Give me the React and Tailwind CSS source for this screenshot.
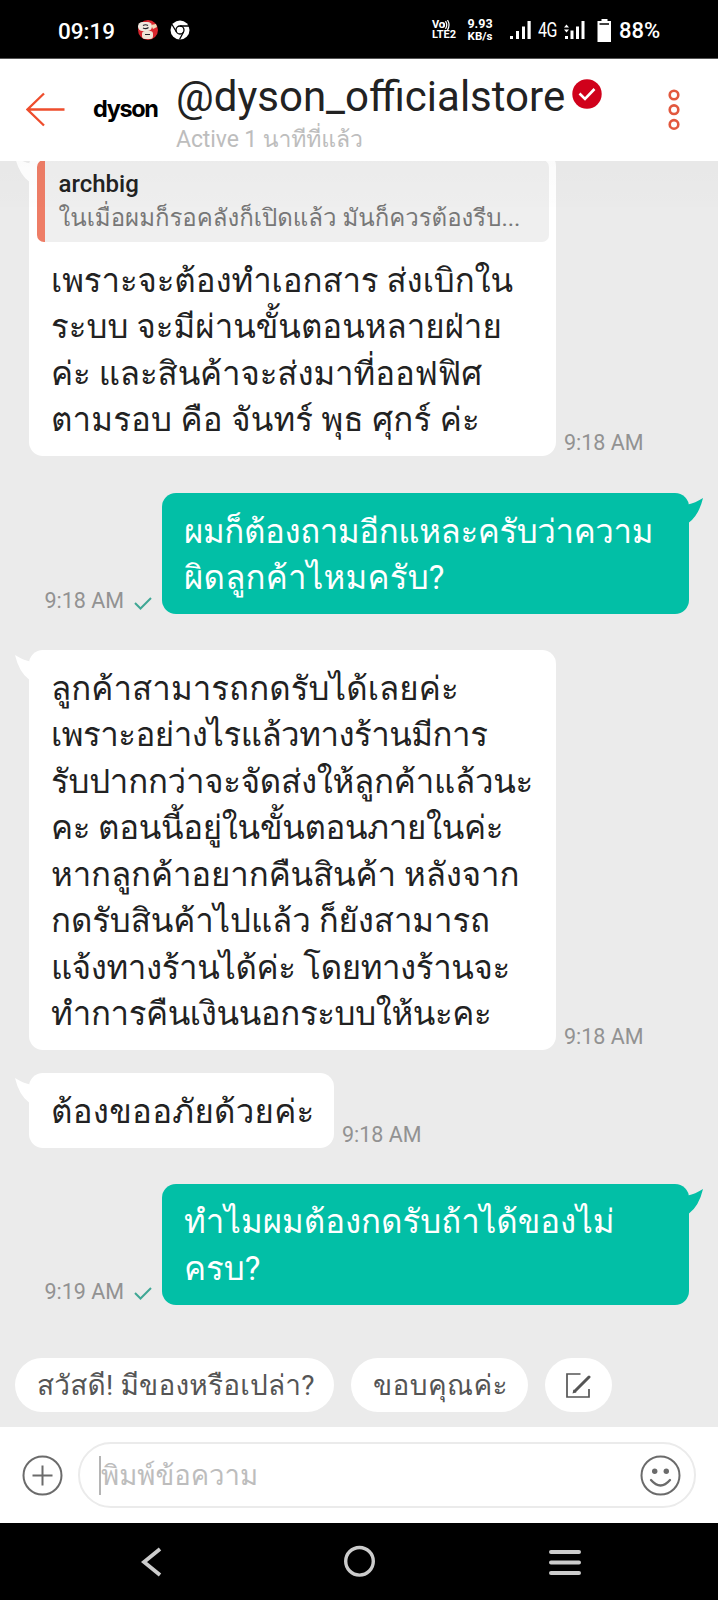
import React from 'react';

// `fit` nudges the letter spacing of a line
const messages = [
    {
        id: 1,
        side: 'left',
        time: '9:18 AM',
        box: 'w-[527px] -mt-[9px]',
        quote: {
            name: 'archbig',
            text: 'ในเมื่อผมก็รอคลังก็เปิดแล้ว มันก็ควรต้องรีบ...'
        },
        lines: [
            { text: 'เพราะจะต้องทำเอกสาร ส่งเบิกใน', fit: 'tracking-[-0.1px]' },
            { text: 'ระบบ จะมีผ่านขั้นตอนหลายฝ่าย' },
            { text: 'ค่ะ และสินค้าจะส่งมาที่ออฟฟิศ', fit: 'tracking-[-0.1px]' },
            { text: 'ตามรอบ คือ จันทร์ พุธ ศุกร์ ค่ะ', fit: 'tracking-[0.17px]' }
        ]
    },
    {
        id: 2,
        side: 'right',
        time: '9:18 AM',
        box: 'w-[527px] mt-[37px]',
        lines: [
            { text: 'ผมก็ต้องถามอีกแหละครับว่าความ', fit: 'tracking-[-0.38px]' },
            { text: 'ผิดลูกค้าไหมครับ?', fit: 'tracking-[0.2px]' }
        ]
    },
    {
        id: 3,
        side: 'left',
        time: '9:18 AM',
        box: 'w-[527px] mt-[36px]',
        lines: [
            { text: 'ลูกค้าสามารถกดรับได้เลยค่ะ', fit: 'tracking-[0.07px]' },
            { text: 'เพราะอย่างไรแล้วทางร้านมีการ', fit: 'tracking-[-0.5px]' },
            { text: 'รับปากกว่าจะจัดส่งให้ลูกค้าแล้วนะ', fit: 'tracking-[-0.25px]' },
            { text: 'คะ ตอนนี้อยู่ในขั้นตอนภายในค่ะ', fit: 'tracking-[-0.3px]' },
            { text: 'หากลูกค้าอยากคืนสินค้า หลังจาก', fit: 'tracking-[-0.1px]' },
            { text: 'กดรับสินค้าไปแล้ว ก็ยังสามารถ', fit: 'tracking-[-0.1px]' },
            { text: 'แจ้งทางร้านได้ค่ะ โดยทางร้านจะ', fit: 'tracking-[-0.4px]' },
            { text: 'ทำการคืนเงินนอกระบบให้นะคะ', fit: 'tracking-[-0.38px]' }
        ]
    },
    {
        id: 4,
        side: 'left',
        time: '9:18 AM',
        box: 'w-[305px] mt-[23px]',
        lines: [{ text: 'ต้องขออภัยด้วยค่ะ', fit: 'tracking-[0.3px]' }]
    },
    {
        id: 5,
        side: 'right',
        time: '9:19 AM',
        box: 'w-[527px] mt-[36px]',
        lines: [
            { text: 'ทำไมผมต้องกดรับถ้าได้ของไม่' },
            { text: 'ครบ?' }
        ]
    }
];

const SignalIcon = () => (
    <svg width="21" height="19" viewBox="0 0 21 19" fill="#fff">
        <rect x="0" y="15" width="3" height="3" />
        <rect x="6" y="10" width="3" height="8" />
        <rect x="12" y="5.500" width="3" height="12.500" />
        <rect x="17.500" y="0" width="3.200" height="18" />
    </svg>
);

const StatusBar = () => (
    <div className="flex h-[59px] items-center border-b border-[#555] bg-black pt-[2px] pl-[58px] text-white">
        <span className="mt-px w-[58px] text-[22.500px] font-medium leading-6 whitespace-nowrap">09:19</span>
        <svg className="ml-[21px]" width="22" height="22" viewBox="0 0 22 22">
            <circle cx="11" cy="11" r="10" fill="#d9262e" />
            <rect x="1" y="3" width="14" height="9" rx="4.500" fill="#f1e9e0" />
            <rect x="5" y="12" width="11" height="8" rx="3" fill="#efe3d6" />
            <path d="M14 6l5-1 1 3-4 2z" fill="#f0d9b8" />
            <path d="M6 6.500q2.500-1.500 5 0M6 9q3 1.500 5.500-.5M8 15.500h5" stroke="#24242a" strokeWidth="1.200" fill="none" />
        </svg>
        <svg className="ml-[11px]" width="20" height="20" viewBox="0 0 20 20">
            <circle cx="10" cy="10" r="9.500" fill="#fff" />
            <circle cx="10" cy="10" r="4" fill="#fff" stroke="#000" strokeWidth="1.300" />
            <path d="M10 6h9M6.500 12L2 4.500M13.500 12L9.500 19.500" stroke="#000" strokeWidth="1.300" fill="none" />
        </svg>
        <div className="ml-[242px] w-[25px] text-[11px] font-bold leading-[10px] whitespace-nowrap">
            <div className="flex items-center tracking-tight">
                Vo
                <svg className="-ml-[2px]" width="7" height="10" viewBox="0 0 7 10" fill="none" stroke="#fff" strokeWidth="1.200">
                    <path d="M.500 2.500q2 2.500 0 5M2.500 1.200q2.500 3.800 0 7.600M4.500 0q3 5 0 10" />
                </svg>
            </div>
            <div>LTE2</div>
        </div>
        <div className="ml-[9px] w-[28px] text-center text-[12.500px] font-bold leading-[12.500px] whitespace-nowrap">
            <div>9.93</div>
            <div className="text-[11.500px]">KB/s</div>
        </div>
        <div className="ml-[16px]">
            <SignalIcon />
        </div>
        <span className="ml-[7px] w-[20px] origin-left scale-x-[0.8] text-[20px] leading-5 tracking-[-0.500px] whitespace-nowrap">4G</span>
        <svg className="ml-[6px]" width="21" height="19" viewBox="0 0 21 19" fill="#fff">
            <path d="M0 6.500l2.500-3 2.500 3zM0 8.500l2.500 3 2.500-3z" />
            <rect x="1" y="15" width="3" height="3" />
            <rect x="6.500" y="9.500" width="3" height="8.500" />
            <rect x="12" y="5.500" width="3" height="12.500" />
            <rect x="17.500" y="0" width="3" height="18" />
        </svg>
        <svg className="ml-[12px]" width="15" height="23" viewBox="0 0 15 23">
            <path d="M4.500 0h6v2H14v21H.500V2h4z" fill="#fff" />
            <path d="M2.500 5h9.500" stroke="#000" strokeWidth="1.500" />
        </svg>
        <span className="mt-[2px] ml-[7px] text-[22px] font-medium leading-6 whitespace-nowrap">88%</span>
    </div>
);

const ChatHeader = () => (
    <div className="flex h-[102px] bg-white">
        <svg className="mt-[33px] ml-[26px]" width="40" height="36" viewBox="0 0 40 36" fill="none" stroke="#ee4d2d" strokeWidth="2.300">
            <path d="M38.500 17.500H2M18 1.500L1.500 17.500L18 33.500" />
        </svg>
        <span className="mt-[35px] ml-[27px] h-[30px] w-[66px] font-[Inter,sans-serif] text-[23.500px] font-bold leading-[30px] tracking-[-1.400px] text-black">dyson</span>
        <div className="ml-[17px] flex-1">
            <div className="flex items-start">
                <span className="mt-[14px] text-[42px] leading-[48px] whitespace-nowrap text-[#222]">@dyson_officialstore</span>
                <svg className="mt-[20px] ml-[7px]" width="30" height="30" viewBox="0 0 30 30">
                    <circle cx="15" cy="15" r="14.700" fill="#d0011b" />
                    <path d="M7.500 14.500l5.500 5.500 9.500-10" fill="none" stroke="#fff" strokeWidth="2.600" />
                </svg>
            </div>
            <div className="mt-[3px] text-[23px] leading-[32px] tracking-[-0.100px] whitespace-nowrap text-[#bdbdbd]">Active 1 นาทีที่แล้ว</div>
        </div>
        <svg className="mt-[30px] mr-[38px]" width="12" height="42" viewBox="0 0 12 42" fill="none" stroke="#e2583e" strokeWidth="2.600">
            <circle cx="6" cy="6" r="4.300" />
            <circle cx="6" cy="20.700" r="4.300" />
            <circle cx="6" cy="35.400" r="4.300" />
        </svg>
    </div>
);

const Bubble = ({ message }) => {
    const isRight = message.side === 'right';

    return (
        <div className={`flex shrink-0 items-end ${isRight ? 'justify-end pr-[29px]' : 'pl-[29px]'}`}>
            {isRight && (
                <div className="flex items-center text-[21.500px] leading-[26px] whitespace-nowrap text-[#929292]">
                    {message.time}
                    <svg className="mt-[4px] mr-[10px] ml-[10px]" width="18" height="13" viewBox="0 0 18 13" fill="none" stroke="#3fa795" strokeWidth="2">
                        <path d="M1 6l5.500 5.500L17 1" />
                    </svg>
                </div>
            )}
            <div className={`relative shrink-0 rounded-[14px] ${message.box} ${isRight ? 'bg-[#02bfa6] text-white' : 'bg-white text-[#222]'}`}>
                {/* speech tail */}
                <svg
                    className={`absolute top-[5px] ${isRight ? 'left-full -ml-px' : 'right-full -mr-px -scale-x-100'}`}
                    width="15"
                    height="25"
                    viewBox="0 0 15 25"
                    fill={isRight ? '#02bfa6' : '#fff'}
                >
                    <path d="M0 6.500Q7 5 15 0Q11 17 1 24.500H0z" />
                </svg>
                {message.quote && (
                    <div className="mx-[7.500px] mt-[8px] flex h-[82px] flex-col overflow-hidden rounded-[7px] border-l-[8px] border-[#ee7d66] bg-[#efefef] pt-[7px] pl-[14px]">
                        <span className="mt-[3px] text-[24px] font-medium leading-[29px]">{message.quote.name}</span>
                        <span className="text-[24px] leading-[38px] whitespace-nowrap text-[#777]">{message.quote.text}</span>
                    </div>
                )}
                <div className="px-[22px] pt-[15.500px] pb-[12.500px] text-[33px] leading-[46.500px]">
                    {message.lines.map((line) => (
                        <div key={line.text} className="h-[46.500px] whitespace-nowrap">
                            <span className={line.fit}>{line.text}</span>
                        </div>
                    ))}
                </div>
            </div>
            {!isRight && (
                <span className="ml-[8px] text-[21.500px] leading-[26px] whitespace-nowrap text-[#929292]">{message.time}</span>
            )}
        </div>
    );
};

const QuickReplies = () => (
    <div className="mt-auto flex h-[54px] shrink-0 gap-[17px] pl-[15px] text-[28px] leading-[56px] whitespace-nowrap text-[#555]">
        <div className="w-[319px] rounded-full bg-white pl-[22px] tracking-[0.200px]">สวัสดี! มีของหรือเปล่า?</div>
        <div className="w-[177px] rounded-full bg-white pl-[22px] tracking-[0.400px]">ขอบคุณค่ะ</div>
        <div className="flex w-[67px] items-center justify-center rounded-full bg-white">
            <svg width="25" height="25" viewBox="0 0 25 25" fill="none" stroke="#555">
                <path d="M14.500 1H1v23h22v-8" strokeWidth="1.700" />
                <path d="M9 18L23 4" strokeWidth="3" strokeLinecap="round" />
                <path d="M6.500 20.500l1-4 3 2.800z" fill="#555" stroke="none" />
            </svg>
        </div>
    </div>
);

const InputBar = () => (
    <div className="flex h-[96px] items-center bg-white pl-[22px]">
        <svg width="41" height="41" viewBox="0 0 41 41" fill="none" stroke="#6b6b6b" strokeWidth="2">
            <circle cx="20.500" cy="20.500" r="19" />
            <path d="M20.500 10.500v20M10.500 20.500h20" />
        </svg>
        <div className="ml-[15px] flex h-[66px] w-[618px] items-center rounded-full border-2 border-[#ebebeb] pr-[13px] pl-[19px]">
            <span className="h-[39px] w-[2px] bg-[#b5b5b5]" />
            <span className="mt-[2px] flex-1 text-[27.500px] leading-[60px] whitespace-nowrap text-[#bdbdbd]">พิมพ์ข้อความ</span>
            <svg width="41" height="41" viewBox="0 0 41 41" fill="none" stroke="#6b6b6b" strokeWidth="2">
                <circle cx="20.500" cy="20.500" r="19" />
                <path d="M11 25q9.500 11 19 0" strokeWidth="2.300" strokeLinecap="round" />
                <circle cx="14.700" cy="16.200" r="2.700" fill="#6b6b6b" stroke="none" />
                <circle cx="26.300" cy="16.200" r="2.700" fill="#6b6b6b" stroke="none" />
            </svg>
        </div>
    </div>
);

const NavBar = () => (
    <div className="flex h-[77px] bg-black">
        <svg className="mt-[24px] ml-[141px]" width="21" height="30" viewBox="0 0 21 30" fill="none" stroke="#ccc" strokeWidth="3.800">
            <path d="M19 2L3 15l16 13" />
        </svg>
        <svg className="mt-[22px] ml-[182px]" width="32" height="33" viewBox="0 0 32 33" fill="none" stroke="#ccc" strokeWidth="3.400">
            <circle cx="15.500" cy="16.300" r="13.800" />
        </svg>
        <svg className="mt-[26px] ml-[173px]" width="32" height="27" viewBox="0 0 32 27" fill="none" stroke="#ccc" strokeWidth="4" strokeLinecap="round">
            <path d="M2 3h28M2 13.500h28M2 24h28" />
        </svg>
    </div>
);

const App = () => {
    return (
        <div className="h-[1600px] w-[718px] overflow-hidden bg-black font-[Roboto,Loma,'Liberation_Sans',sans-serif]">
            <StatusBar />
            <ChatHeader />
            <div className="relative flex h-[1266px] flex-col overflow-hidden bg-[#ebebeb] pb-[15px]">
                {messages.map((message) => (
                    <Bubble key={message.id} message={message} />
                ))}
                <QuickReplies />
                {/* header shadow */}
                <div className="absolute inset-x-0 top-0 h-[46px] bg-gradient-to-b from-black/[0.015] to-black/[0.005]" />
            </div>
            <InputBar />
            <NavBar />
        </div>
    );
};

export default App;
